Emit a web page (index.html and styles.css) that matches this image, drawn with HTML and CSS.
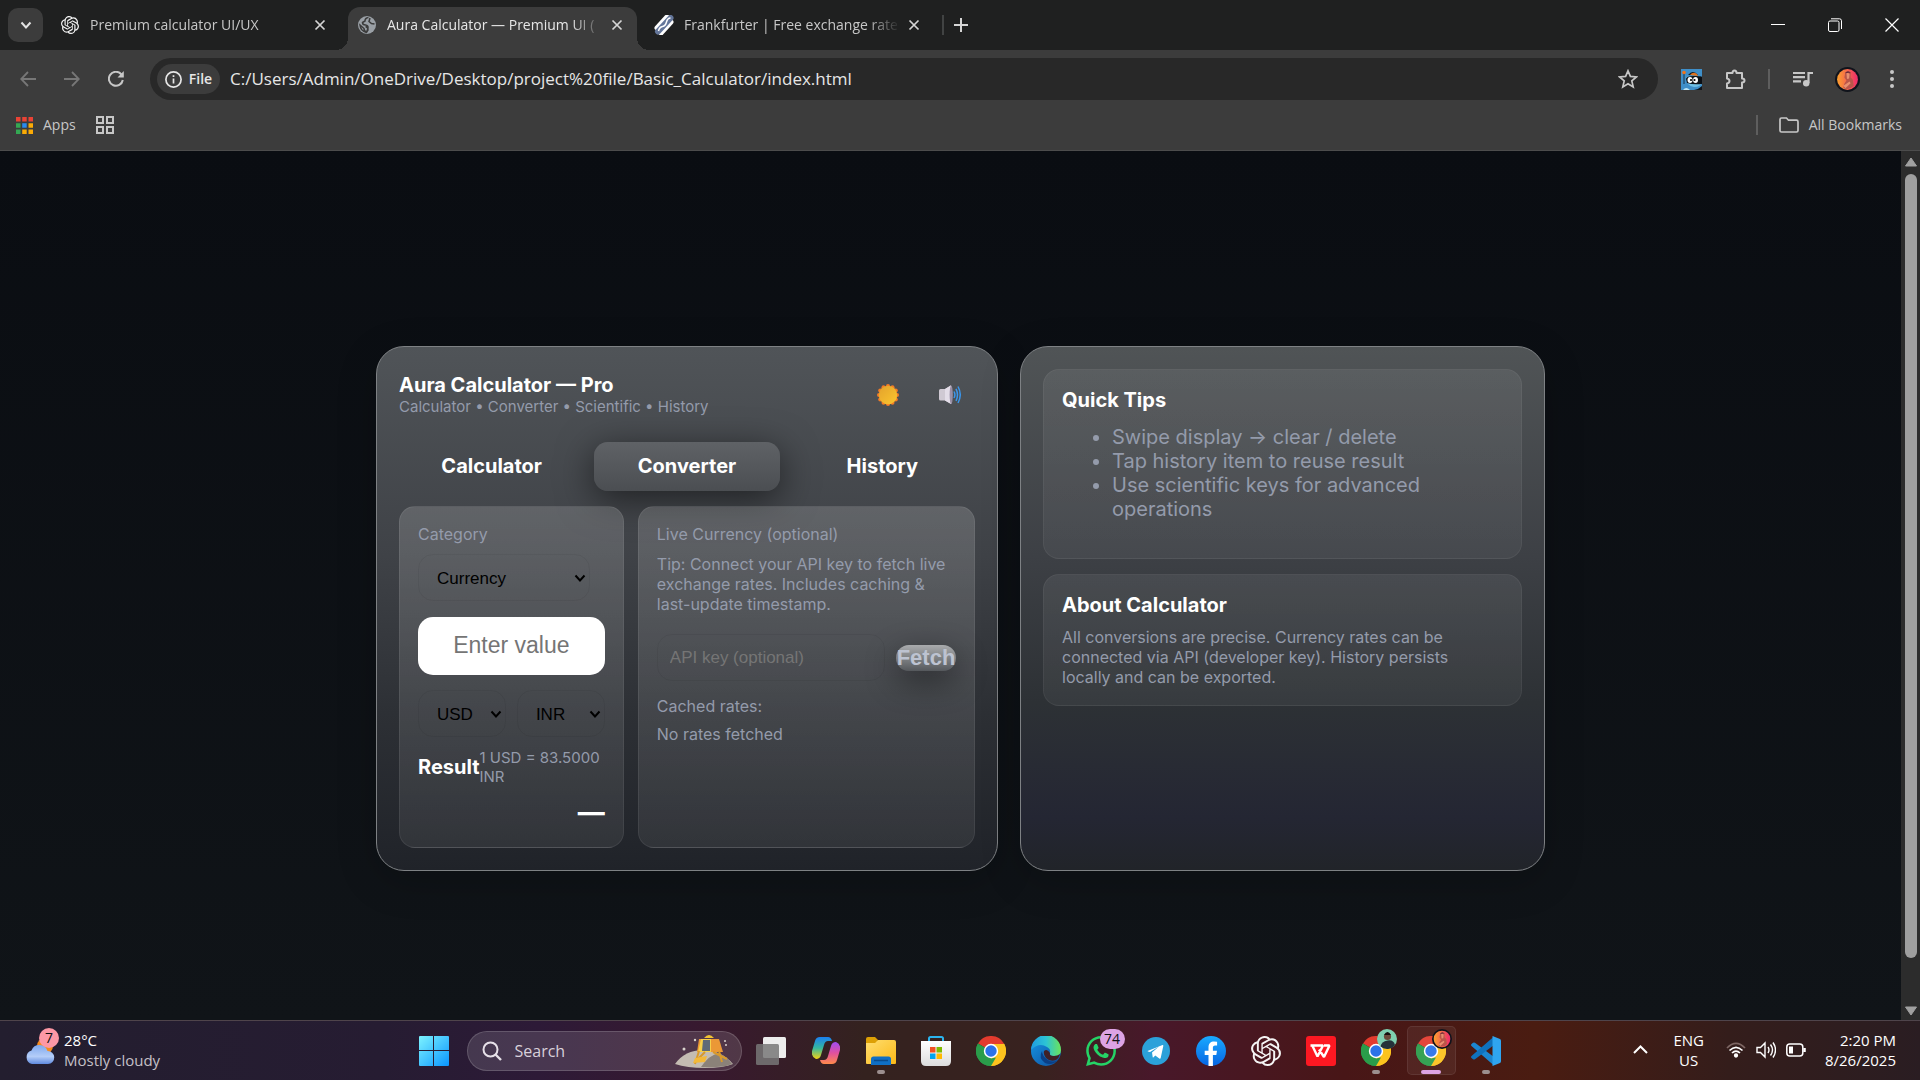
FILE: index.html
```html
<!DOCTYPE html>
<html lang="en">
<head>
<meta charset="utf-8">
<meta name="viewport" content="width=device-width, initial-scale=1">
<title>Aura Calculator — Premium UI</title>
<link rel="stylesheet" href="styles.css">
</head>
<body>
<svg class="defs" aria-hidden="true">
  <defs>
    <linearGradient id="win" x1="0" y1="0" x2="1" y2="1"><stop offset="0" stop-color="#7df3ff"/><stop offset="1" stop-color="#0a95ff"/></linearGradient>
    <linearGradient id="cloud" x1="0" y1="0" x2="0" y2="1"><stop offset="0" stop-color="#7fa9ee"/><stop offset=".6" stop-color="#b4cdf8"/><stop offset="1" stop-color="#5f8ade"/></linearGradient>
    <linearGradient id="folder" x1="0" y1="0" x2="1" y2="1"><stop offset="0" stop-color="#ffde70"/><stop offset="1" stop-color="#fbb917"/></linearGradient>
    <linearGradient id="cop1" x1="0" y1="0" x2="0" y2="1"><stop offset="0" stop-color="#1b7ff0"/><stop offset=".5" stop-color="#35b8a0"/><stop offset="1" stop-color="#f2d313"/></linearGradient>
    <linearGradient id="cop2" x1="0" y1="0" x2="0" y2="1"><stop offset="0" stop-color="#a04df5"/><stop offset=".5" stop-color="#e0509e"/><stop offset="1" stop-color="#ff8a4a"/></linearGradient>
    <linearGradient id="edge1" x1="0" y1="0" x2="1" y2="0"><stop offset="0" stop-color="#1f9be0"/><stop offset=".5" stop-color="#2cc3d5"/><stop offset="1" stop-color="#6be35a"/></linearGradient>
    <linearGradient id="edge2" x1="0" y1="0" x2="1" y2="1"><stop offset="0" stop-color="#1598e6"/><stop offset="1" stop-color="#0f4d9c"/></linearGradient>
    <linearGradient id="fb" x1="0" y1="0" x2="0" y2="1"><stop offset="0" stop-color="#19aaff"/><stop offset="1" stop-color="#0765e3"/></linearGradient>
    <linearGradient id="face" x1="0" y1="0" x2="1" y2="0"><stop offset="0" stop-color="#fba02e"/><stop offset="1" stop-color="#ef2b6c"/></linearGradient>
    <linearGradient id="sun" x1="0" y1="0" x2="1" y2="1"><stop offset="0" stop-color="#e3a22c"/><stop offset="1" stop-color="#fbc62f"/></linearGradient>
    <linearGradient id="bag" x1="0" y1="0" x2="0" y2="1"><stop offset="0" stop-color="#fff"/><stop offset="1" stop-color="#dcdcdc"/></linearGradient>
    <symbol id="openai" viewBox="0 0 24 24"><path d="M22.2819 9.8211a5.9847 5.9847 0 0 0-.5157-4.9108 6.0462 6.0462 0 0 0-6.5098-2.9A6.0651 6.0651 0 0 0 4.9807 4.1818a5.9847 5.9847 0 0 0-3.9977 2.9 6.0462 6.0462 0 0 0 .7427 7.0966 5.98 5.98 0 0 0 .511 4.9107 6.051 6.051 0 0 0 6.5146 2.9001A5.9847 5.9847 0 0 0 13.2599 24a6.0557 6.0557 0 0 0 5.7718-4.2058 5.9894 5.9894 0 0 0 3.9977-2.9001 6.0557 6.0557 0 0 0-.7475-7.0729zm-9.022 12.6081a4.4755 4.4755 0 0 1-2.8764-1.0408l.1419-.0804 4.7783-2.7582a.7948.7948 0 0 0 .3927-.6813v-6.7369l2.02 1.1686a.071.071 0 0 1 .038.052v5.5826a4.504 4.504 0 0 1-4.4945 4.4944zm-9.6607-4.1254a4.4708 4.4708 0 0 1-.5346-3.0137l.142.0852 4.783 2.7582a.7712.7712 0 0 0 .7806 0l5.8428-3.3685v2.3324a.0804.0804 0 0 1-.0332.0615L9.74 19.9502a4.4992 4.4992 0 0 1-6.1408-1.6464zM2.3408 7.8956a4.485 4.485 0 0 1 2.3655-1.9728V11.6a.7664.7664 0 0 0 .3879.6765l5.8144 3.3543-2.0201 1.1685a.0757.0757 0 0 1-.071 0l-4.8303-2.7865A4.504 4.504 0 0 1 2.3408 7.872zm16.5963 3.8558L13.1038 8.364 15.1192 7.2a.0757.0757 0 0 1 .071 0l4.8303 2.7913a4.4944 4.4944 0 0 1-.6765 8.1042v-5.6772a.79.79 0 0 0-.407-.667zm2.0107-3.0231l-.142-.0852-4.7735-2.7818a.7759.7759 0 0 0-.7854 0L9.409 9.2297V6.8974a.0662.0662 0 0 1 .0284-.0615l4.8303-2.7866a4.4992 4.4992 0 0 1 6.6802 4.66zM8.3065 12.863l-2.02-1.1638a.0804.0804 0 0 1-.038-.0567V6.0742a4.4992 4.4992 0 0 1 7.3757-3.4537l-.142.0805L8.704 5.459a.7948.7948 0 0 0-.3927.6813zm1.0976-2.3654l2.602-1.4998 2.6069 1.4998v2.9994l-2.5974 1.4997-2.6067-1.4997Z" fill="currentColor"/></symbol>
    <symbol id="x" viewBox="0 0 12 12"><path d="M1.5 1.5l9 9M10.5 1.5l-9 9" stroke="currentColor" stroke-width="1.7" fill="none"/></symbol>
    <symbol id="chev" viewBox="0 0 12 12"><path d="M1.5 3.5L6 8.5l4.500-5" stroke="currentColor" stroke-width="2" fill="none"/></symbol>
    <symbol id="chrome" viewBox="0 0 30 30">
      <path d="M15 15L2 7.500A15 15 0 0 1 28 7.500z" fill="#e33b2e"/>
      <path d="M15 15L28 7.500A15 15 0 0 1 15 30z" fill="#fcc31e"/>
      <path d="M15 15l0 15A15 15 0 0 1 2 7.500z" fill="#2a9d4a"/>
      <path d="M15 8h13.200A15 15 0 0 1 15 30l6.500-12z" fill="#fcc31e"/>
      <path d="M2 7.500l7 12.500 6 2.500 5-1L15 30A15 15 0 0 1 2 7.500z" fill="#2a9d4a"/>
      <circle cx="15" cy="15" r="7.200" fill="#fff"/><circle cx="15" cy="15" r="5.700" fill="#2b72e8"/>
    </symbol>
    <symbol id="avatar" viewBox="0 0 24 24">
      <circle cx="12" cy="12" r="12" fill="#10131b"/><circle cx="12" cy="12" r="10" fill="url(#face)"/>
      <path d="M10 5q3-2 5 1v4l2 2 1 6q-5 5-10 2l1-4 2-3-2-3z" fill="#b9564a"/><path d="M11 6q2-1 3 1l-.5 4-2 .5zM8 18l6-4 1 1.500-5 5z" fill="#e89070"/><path d="M9.500 6q3-4 6 0l-2-.5z" fill="#6a2c3a"/>
    </symbol>
  </defs>
</svg>

<div class="window">
  <header class="tabstrip">
    <button class="tab-search" aria-label="Search tabs"><svg width="12" height="12"><use href="#chev"/></svg></button>
    <div class="tab">
      <svg class="favicon bright" width="18" height="18"><use href="#openai"/></svg>
      <span class="tab-title">Premium calculator UI/UX</span>
      <button class="tab-close" aria-label="Close tab"><svg width="12" height="12"><use href="#x"/></svg></button>
    </div>
    <div class="tab active">
      <svg class="favicon" width="18" height="18" viewBox="0 0 18 18"><circle cx="9" cy="9" r="9" fill="#9aa0a6"/><path d="M10.500 1.500Q7 2 7 5L4.500 6.500q0 2.500 3 2.500 3 .5 2.500 3T8.500 16q-2.500-1-2.500-3.500L2 9q.5 6 6.500 7.500L10 14q0-3-2.500-3.500M12 2l-1 3.500 2.500 2L16.500 8" fill="none" stroke="#3c3c3c" stroke-width="1.500"/></svg>
      <span class="tab-title">Aura Calculator — Premium UI (</span>
      <button class="tab-close" aria-label="Close tab"><svg width="12" height="12"><use href="#x"/></svg></button>
    </div>
    <div class="tab">
      <svg class="favicon" width="20" height="20" viewBox="0 0 20 20"><path d="M3 13L13 2" stroke="#fff" stroke-width="5" stroke-linecap="round"/><path d="M7 18L17 7" stroke="#fff" stroke-width="5" stroke-linecap="round"/><path d="M4 16.500L16.500 3" stroke="#64769a" stroke-width="6" stroke-linecap="round"/><path d="M4.500 16q1-4 4-4.500t4-4.500 4-4" stroke="#fff" stroke-width="1.500" fill="none"/></svg>
      <span class="tab-title">Frankfurter | Free exchange rate</span>
      <button class="tab-close" aria-label="Close tab"><svg width="12" height="12"><use href="#x"/></svg></button>
    </div>
    <span class="strip-sep"></span>
    <button class="new-tab" aria-label="New tab"><svg width="14" height="14" viewBox="0 0 14 14"><path d="M7 0v14M0 7h14" stroke="currentColor" stroke-width="2"/></svg></button>
    <div class="win-controls">
      <button aria-label="Minimize"><svg width="14" height="14" viewBox="0 0 14 14"><path d="M0 6.500h14" stroke="#fff"/></svg></button>
      <button aria-label="Restore"><svg width="14" height="14" viewBox="0 0 14 14" fill="none" stroke="#fff"><rect x=".5" y="3" width="10.500" height="10.500" rx="1.500"/><path d="M3 .8h8.500q2 0 2 2V11"/></svg></button>
      <button aria-label="Close"><svg width="14" height="14" viewBox="0 0 14 14"><path d="M.5.500l13 13M13.500.500l-13 13" stroke="#fff" stroke-width="1.200"/></svg></button>
    </div>
  </header>

  <div class="toolbar">
    <button class="tool dim" aria-label="Back"><svg width="16" height="16" viewBox="0 0 16 16"><path d="M16 8H1.500M8 1L1.200 8 8 15" fill="none" stroke="currentColor" stroke-width="1.800"/></svg></button>
    <button class="tool dim" aria-label="Forward"><svg width="16" height="16" viewBox="0 0 16 16"><path d="M0 8h14.500M8 1l6.800 7L8 15" fill="none" stroke="currentColor" stroke-width="1.800"/></svg></button>
    <button class="tool" aria-label="Reload"><svg width="16" height="16" viewBox="0 0 16 16"><path d="M14.800 9A7 7 0 1 1 13 3l1.500 1.800" fill="none" stroke="currentColor" stroke-width="2"/><path d="M15.800 0v6.500H9.500z" fill="currentColor"/></svg></button>
    <div class="omnibox">
      <button class="chip"><svg width="17" height="17" viewBox="0 0 17 17"><circle cx="8.500" cy="8.500" r="7.600" fill="none" stroke="currentColor" stroke-width="1.700"/><path d="M8.500 7.500v5M8.500 4.200v1.800" stroke="currentColor" stroke-width="1.700"/></svg>File</button>
      <input class="url" type="text" aria-label="Address" value="C:/Users/Admin/OneDrive/Desktop/project%20file/Basic_Calculator/index.html">
      <button class="star" aria-label="Bookmark this tab"><svg width="20" height="20" viewBox="0 0 20 20"><path d="M10 1.800l2.400 5.600 6 .5-4.600 4 1.400 6-5.200-3.200L4.800 17.900l1.400-6-4.600-4 6-.5z" fill="none" stroke="currentColor" stroke-width="1.700"/></svg></button>
    </div>
    <div class="tools-right">
      <button class="tool" aria-label="Extension"><svg width="21" height="21" viewBox="0 0 21 21"><rect width="21" height="21" fill="#3f8fc9"/><path d="M3 4v11" stroke="#16324a"/><circle cx="3" cy="3.500" r="1.800" fill="#f0731a"/><path d="M7 6q5-6 10 0z" fill="#12181e"/><path d="M9 6q3-4 7-1l1 2z" fill="#e0731f"/><path d="M5 8q8-2 16 0v5q-1 5-8 5-8-1-8-10z" fill="#6fc0e6"/><path d="M5 10q0-3 8-3t8 1v7q-9 1-15-1z" fill="#0b1016"/><ellipse cx="9" cy="11" rx="2.500" ry="3" fill="#fff"/><ellipse cx="14.500" cy="11" rx="2.500" ry="3" fill="#fff"/><circle cx="10" cy="11" r="1.100"/><circle cx="13.500" cy="11" r="1.100"/><path d="M13 21q5-1 8-4v4z" fill="#11161c"/><path d="M2 21q3-4 7 0z" fill="#bfe6f5"/></svg></button>
      <button class="tool" aria-label="Extensions"><svg width="21" height="21" viewBox="0 0 21 21"><path d="M2 4h5.500q0-2.500 2-2.500t2 2.500H17v5.500q2.500 0 2.500 2t-2.500 2V19H2v-4.500q2.500-.5 2.500-2.500T2 9.500z" fill="none" stroke="currentColor" stroke-width="2" stroke-linejoin="round"/></svg></button>
      <span class="sep"></span>
      <button class="tool" aria-label="Media controls"><svg width="20" height="16" viewBox="0 0 20 16"><path d="M0 2h12M0 6.200h12M0 10.400h8M15.500 12V2H20" stroke="currentColor" stroke-width="2.200" fill="none"/><circle cx="13.200" cy="12.300" r="3.200" fill="currentColor"/></svg></button>
      <button class="tool" aria-label="Profile"><svg width="25" height="25"><use href="#avatar"/></svg></button>
      <button class="tool menu" aria-label="Menu"><svg width="6" height="18" viewBox="0 0 6 18" fill="currentColor"><circle cx="3" cy="2" r="2"/><circle cx="3" cy="9" r="2"/><circle cx="3" cy="16" r="2"/></svg></button>
    </div>
  </div>

  <nav class="bookmarks">
    <a href="#apps"><svg width="17" height="17" viewBox="0 0 17 17"><path d="M0 0h4.500v4.500H0zM6.200 0h4.500v4.500H6.200zM12.500 0H17v4.500h-4.500z" fill="#ea4335"/><path d="M0 6.200h4.500v4.500H0zM0 12.500h4.500V17H0z" fill="#34a853"/><path d="M6.200 6.200h4.500v4.500H6.200z" fill="#2a8af0"/><path d="M12.500 6.200H17v4.500h-4.500zM6.200 12.500h4.500V17H6.200zM12.500 12.500H17V17h-4.500z" fill="#fbab05"/></svg>Apps</a>
    <a href="#groups" aria-label="Tab groups"><svg width="18" height="18" viewBox="0 0 18 18"><path d="M1 1h6v6H1zM11 1h6v6h-6zM1 11h6v6H1zM11 11h6v6h-6z" fill="none" stroke="currentColor" stroke-width="2"/></svg></a>
    <a class="all" href="#all"><span class="sep"></span><svg width="20" height="16" viewBox="0 0 20 16"><path d="M1 2.500Q1 1 2.500 1h5L9.500 3.200h8Q19 3.200 19 4.700v8.800q0 1.500-1.500 1.500h-15Q1 15 1 13.500z" fill="none" stroke="currentColor" stroke-width="1.700"/></svg>All Bookmarks</a>
  </nav>

  <div class="viewport">
    <main class="page">
      <section class="card">
        <header class="card-head">
          <div class="brand">
            <h1>Aura Calculator — Pro</h1>
            <p class="sub">Calculator • Converter • Scientific • History</p>
          </div>
          <button class="icon-btn" aria-label="Toggle theme"><svg width="22" height="22" viewBox="0 0 22 22"><g fill="#f57c24"><circle cx="11" cy="11" r="9"/><circle cx="11" cy="2" r="2"/><circle cx="15.500" cy="3.200" r="2"/><circle cx="18.800" cy="6.500" r="2"/><circle cx="20" cy="11" r="2"/><circle cx="18.800" cy="15.500" r="2"/><circle cx="15.500" cy="18.800" r="2"/><circle cx="11" cy="20" r="2"/><circle cx="6.500" cy="18.800" r="2"/><circle cx="3.200" cy="15.500" r="2"/><circle cx="2" cy="11" r="2"/><circle cx="3.200" cy="6.500" r="2"/><circle cx="6.500" cy="3.200" r="2"/></g><circle cx="11" cy="11" r="9.200" fill="url(#sun)"/></svg></button>
          <button class="icon-btn" aria-label="Toggle sound"><svg width="22" height="20" viewBox="0 0 22 20"><path d="M0 5.500q0-1.500 1.500-1.500H6L11.500 0.500H12V19l-6-3.500H1.500Q0 15.500 0 14z" fill="#cfc9d3"/><path d="M6 4L12 .5V19l-6-3.500z" fill="#e3dde8"/><ellipse cx="12.200" cy="9.800" rx="1.600" ry="9.300" fill="#998fa5"/><path d="M15 6.500q1.800 3.200 0 6.500M17 3.800q3 6 0 12M19 1.500q4.500 8.200 0 16.500" fill="none" stroke="#3a96ec" stroke-width="1.500"/></svg></button>
        </header>
        <nav class="modes">
          <button>Calculator</button>
          <button class="on">Converter</button>
          <button>History</button>
        </nav>
        <div class="panels">
          <section class="panel">
            <label class="note" for="category">Category</label>
            <div class="select wide"><select id="category"><option>Currency</option></select><svg width="12" height="12"><use href="#chev"/></svg></div>
            <input class="amount" type="text" placeholder="Enter value" aria-label="Value">
            <div class="units">
              <div class="select"><select aria-label="From"><option>USD</option></select><svg width="12" height="12"><use href="#chev"/></svg></div>
              <div class="select"><select aria-label="To"><option>INR</option></select><svg width="12" height="12"><use href="#chev"/></svg></div>
            </div>
            <div class="result"><strong>Result</strong><span>1 USD = 83.5000 INR</span></div>
            <output class="total">—</output>
          </section>
          <section class="panel">
            <p class="note">Live Currency (optional)</p>
            <p class="note tip">Tip: Connect your API key to fetch live exchange rates. Includes caching &amp; last-update timestamp.</p>
            <div class="fetch-row">
              <input class="key" type="text" placeholder="API key (optional)" aria-label="API key">
              <button class="fetch">Fetch</button>
            </div>
            <p class="note cached">Cached rates:</p>
            <p class="note rates">No rates fetched</p>
          </section>
        </div>
      </section>

      <aside class="card side">
        <section class="info">
          <h2>Quick Tips</h2>
          <ul>
            <li>Swipe display → clear / delete</li>
            <li>Tap history item to reuse result</li>
            <li>Use scientific keys for advanced operations</li>
          </ul>
        </section>
        <section class="info">
          <h2>About Calculator</h2>
          <p class="note">All conversions are precise. Currency rates can be connected via API (developer key). History persists locally and can be exported.</p>
        </section>
      </aside>
    </main>
    <div class="scrollbar" aria-hidden="true">
      <svg width="14" height="10" viewBox="0 0 14 10"><path d="M7 1l5.500 8h-11z" fill="#a0a0a0" stroke="#a0a0a0" stroke-linejoin="round"/></svg>
      <div class="track"><div class="thumb"></div></div>
      <svg width="14" height="10" viewBox="0 0 14 10"><path d="M7 9l5.500-8h-11z" fill="#a0a0a0" stroke="#a0a0a0" stroke-linejoin="round"/></svg>
    </div>
  </div>

  <footer class="taskbar">
    <a class="weather" href="#weather">
      <span class="weather-icon"><svg width="30" height="32" viewBox="0 0 30 32"><circle cx="20" cy="14" r="8" fill="#f58a1c"/><path d="M7 32a7 7 0 0 1-.5-13.500A8.500 8.500 0 0 1 22.500 19 6.500 6.500 0 0 1 23 32z" fill="url(#cloud)"/></svg><span class="badge pink">7</span></span>
      <span class="weather-text"><b>28°C</b><span>Mostly cloudy</span></span>
    </a>
    <div class="apps">
      <button class="app" aria-label="Start"><svg width="30" height="30" viewBox="0 0 30 30"><path d="M0 1q0-1 1-1h13v14H0zM15 0h14q1 0 1 1v13H15zM0 15h14v15H1q-1 0-1-1zM15 15h15v14q0 1-1 1H15z" fill="url(#win)"/></svg></button>
      <label class="search">
        <svg width="20" height="20" viewBox="0 0 20 20"><circle cx="8.500" cy="8.500" r="7" fill="none" stroke="#e6e0e8" stroke-width="2"/><path d="M13.500 13.500L19 19" stroke="#e6e0e8" stroke-width="2.400"/></svg>
        <input type="search" placeholder="Search" aria-label="Search">
        <svg width="58" height="34" viewBox="0 0 58 34"><path d="M0 30Q10 16 28 16t30 14q-10 4-28 4T0 30z" fill="#c4bcb2"/><path d="M26 33q8-12 18-14 8 4 13 11-10 4-31 3z" fill="#8b8279"/><path d="M24 5h20l4 13H22z" fill="#eb9836"/><path d="M26 5h10v13H23z" fill="#f6cf4a"/><path d="M28 6h7v11h-8z" fill="#5f6a78"/><path d="M29 4q5-6 10 0z" fill="#f1c232"/><path d="M24 17l-4 13M30 18l-10 10M44 17l3 11M38 18l14 7" stroke="#d99a2b" stroke-width="2"/><path d="M20 24l12-2-2 6-12 1z" fill="#f3b93a"/><g fill="#d8d2cc"><circle cx="9" cy="15" r="1.500"/><circle cx="20" cy="6" r="1.200"/><circle cx="50" cy="7" r="1"/><circle cx="51" cy="11" r="1"/></g></svg>
      </label>
      <button class="app" aria-label="Task view"><svg width="30" height="30" viewBox="0 0 30 30"><rect x="7" y="1" width="23" height="21" rx="1.500" fill="#ededed"/><rect x="0" y="8" width="23" height="21" rx="1.500" fill="#777" fill-opacity=".85"/></svg></button>
      <button class="app" aria-label="Copilot"><svg width="28" height="27" viewBox="0 0 28 27"><path d="M8 0h8q3 0 4 4h-4q-3 0-4 4l-3 10q-1 4-5 4-5-2-4-8L3 4q1-4 5-4z" fill="url(#cop1)"/><path d="M20 27h-8q-3 0-4-4h4q3 0 4-4l3-10q1-4 5-4 5 2 4 8l-3 10q-1 4-5 4z" fill="url(#cop2)"/></svg></button>
      <button class="app open" aria-label="File Explorer"><svg width="30" height="28" viewBox="0 0 30 28"><path d="M0 2q0-2 2-2h7l3 3-2 5H0z" fill="#dda005"/><path d="M0 6h9l3-3h16q2 0 2 2v21q0 1-1 1H1q-1 0-1-1z" fill="url(#folder)"/><path d="M5 28v-6q0-2.500 2.500-2.500h15Q25 19.500 25 22v6z" fill="#0f6fc4"/><path d="M8 23.500h14" stroke="#084b8c" stroke-width="1.500"/></svg></button>
      <button class="app" aria-label="Microsoft Store"><svg width="30" height="30" viewBox="0 0 30 30"><path d="M8 7V2.500Q8 1 9.500 1h11Q22 1 22 2.500V7" fill="none" stroke="#2bb4ee" stroke-width="2"/><path d="M0 5h30v20q0 5-5 5H5q-5 0-5-5z" fill="url(#bag)"/><path d="M9 11h5.500v5.500H9z" fill="#f25022"/><path d="M15.500 11H21v5.500h-5.500z" fill="#7fba00"/><path d="M9 17.500h5.500V23H9z" fill="#00a4ef"/><path d="M15.500 17.500H21V23h-5.500z" fill="#ffb900"/></svg></button>
      <button class="app" aria-label="Chrome"><svg width="30" height="30"><use href="#chrome"/></svg></button>
      <button class="app" aria-label="Edge"><svg width="30" height="30" viewBox="0 0 30 30"><circle cx="15" cy="15" r="15" fill="url(#edge2)"/><path d="M0 14A15 15 0 0 1 30 14q0 6-7 6-5 0-4-3 1-4-3-6Q8 6 0 14z" fill="url(#edge1)"/><path d="M11 15q-4 7 3 12 7 3 13-3-5 3-10 0-6-4-6-9z" fill="#0b3f86"/><path d="M19 17q-1 3 4 3 4 0 6-2-1 4-4 6-6 2-10-2-3-4-2-7 3-3 6 2z" fill="#402026"/></svg></button>
      <button class="app" aria-label="WhatsApp"><svg width="30" height="30" viewBox="0 0 24 24"><path fill="#25d366" d="M17.472 14.382c-.297-.149-1.758-.867-2.030-.967-.273-.099-.471-.148-.670.150-.197.297-.767.966-.940 1.164-.173.199-.347.223-.644.075-.297-.150-1.255-.463-2.390-1.475-.883-.788-1.480-1.761-1.653-2.059-.173-.297-.018-.458.130-.606.134-.133.298-.347.446-.520.149-.174.198-.298.298-.497.099-.198.050-.371-.025-.520-.075-.149-.669-1.612-.916-2.207-.242-.579-.487-.500-.669-.510-.173-.008-.371-.010-.570-.010-.198 0-.520.074-.792.372-.272.297-1.040 1.016-1.040 2.479 0 1.462 1.065 2.875 1.213 3.074.149.198 2.096 3.200 5.077 4.487.709.306 1.262.489 1.694.625.712.227 1.360.195 1.871.118.571-.085 1.758-.719 2.006-1.413.248-.694.248-1.289.173-1.413-.074-.124-.272-.198-.570-.347m-5.421 7.403h-.004a9.870 9.870 0 01-5.031-1.378l-.361-.214-3.741.982.998-3.648-.235-.374a9.860 9.860 0 01-1.510-5.260c.001-5.450 4.436-9.884 9.888-9.884 2.640 0 5.122 1.030 6.988 2.898a9.825 9.825 0 012.893 6.994c-.003 5.450-4.437 9.884-9.885 9.884m8.413-18.297A11.815 11.815 0 0012.050 0C5.495 0 .160 5.335.157 11.892c0 2.096.547 4.142 1.588 5.945L.057 24l6.305-1.654a11.882 11.882 0 005.683 1.448h.005c6.554 0 11.890-5.335 11.893-11.893a11.821 11.821 0 00-3.480-8.413z"/></svg><span class="badge violet">74</span></button>
      <button class="app" aria-label="Telegram"><svg width="28" height="28" viewBox="0 0 28 28"><circle cx="14" cy="14" r="14" fill="#2ba1da"/><path d="M5.500 14L20.500 8q1-.2.800 1l-2.600 12q-.4 1-1.400.4l-4-3-2 2q-.5.400-.6-.4l-.7-4.500 7-6-9 5.500-2-.6q-1-.4-.5-.4z" fill="#fff"/></svg></button>
      <button class="app" aria-label="Facebook"><svg width="30" height="30" viewBox="0 0 30 30"><circle cx="15" cy="15" r="15" fill="url(#fb)"/><path d="M12.500 30V19H8.700v-4.300h3.800v-3.300c0-3.800 2.200-5.800 5.600-5.800l3 .2v3.800h-2c-1.700 0-2.200 1-2.200 2.100v3H21l-.7 4.300h-3.400v11z" fill="#fff"/></svg></button>
      <button class="app bright" aria-label="ChatGPT"><svg width="30" height="30"><use href="#openai"/></svg></button>
      <button class="app" aria-label="WPS Office"><svg width="30" height="30" viewBox="0 0 30 30"><rect width="30" height="30" rx="3" fill="#fd1822"/><path d="M4.500 9.500H17l-5.500 11L6.500 10M13 13.500l5 7.500 5.500-11.500H18" fill="none" stroke="#fff" stroke-width="2.400" stroke-linejoin="bevel"/></svg></button>
      <button class="app open" aria-label="Chrome, first profile"><svg width="30" height="30"><use href="#chrome"/></svg><svg class="profile" width="20" height="20" viewBox="0 0 20 20"><circle cx="10" cy="10" r="10" fill="#7fd0b0"/><circle cx="10.500" cy="7.500" r="3.600" fill="#6b4a3a"/><path d="M7 6q3.500-6 7 0z" fill="#15110f"/><path d="M3.500 17.500q1-5 7-6t7.500 4.500a10 10 0 0 1-14.500 1.500z" fill="#25323a"/></svg></button>
      <button class="app open current" aria-label="Chrome, second profile"><svg width="30" height="30"><use href="#chrome"/></svg><svg class="profile" width="20" height="20"><use href="#avatar"/></svg></button>
      <button class="app open" aria-label="Visual Studio Code"><svg width="30" height="30" viewBox="0 0 30 30"><path d="M.5 10q-1-1 0-2l1.500-1.200q1-.8 2 0L23 21v8.500z" fill="#1b86d0"/><path d="M.5 20q-1 1 0 2L2 23.200q1 .8 2 0L23 9V.5z" fill="#0f72bd"/><path d="M21.500 0l7.500 3q1 .5 1 2v20q0 1.500-1 2l-7.500 3z" fill="#2fa5f0"/></svg></button>
    </div>
    <div class="tray">
      <button aria-label="Show hidden icons"><svg width="15" height="9" viewBox="0 0 15 9"><path d="M1 8l6.500-6.500L14 8" fill="none" stroke="#fff" stroke-width="2"/></svg></button>
      <span class="lang">ENG<br>US</span>
      <span class="status">
        <svg width="20" height="16" viewBox="0 0 20 16" fill="none" stroke="#fff" stroke-width="1.700"><path d="M1 6q9-9 18 0" stroke="#7d6663"/><path d="M3.500 8.500q6.500-6.500 13 0M6 11q4-4 8 0"/><circle cx="10" cy="13.500" r="1.300" fill="#fff"/></svg>
        <svg width="20" height="18" viewBox="0 0 20 18" fill="none" stroke="#fff" stroke-width="1.400"><path d="M1 6.500h3.500L9 2v14l-4.500-4.500H1zM12 6q2 3 0 6M14.500 3.500q4 5.500 0 11M17 1.500q5 7.500 0 15"/></svg>
        <svg width="20" height="14" viewBox="0 0 20 14"><rect x=".8" y="1" width="16" height="12" rx="3" fill="none" stroke="#fff" stroke-width="1.500"/><rect x="3" y="3.500" width="4" height="7" fill="#fff"/><path d="M18.500 5v4" stroke="#fff" stroke-width="2.500"/></svg>
      </span>
      <span class="clock">2:20 PM<br>8/26/2025</span>
    </div>
  </footer>
</div>
</body>
</html>
```
FILE: styles.css
```css
* { box-sizing: border-box; }
body { margin: 0; }
h1, h2, p, ul { margin: 0; }
button, input, select {
  margin: 0;
  padding: 0;
  border: 0;
  background: none;
  color: inherit;
  font: inherit;
}
button { display: flex; align-items: center; justify-content: center; }
input, select { min-width: 0; outline: 0; }
svg { display: block; flex: none; }
a { color: inherit; text-decoration: none; }
.defs { position: absolute; width: 0; height: 0; }

.window {
  display: flex;
  flex-direction: column;
  height: 100vh;
  overflow: hidden;
  background: #3c3c3c;
  color: #c7c7c7;
  font: 14px/20px "Open Sans", "Noto Sans", sans-serif;
}

/* Tab strip */
.tabstrip {
  display: flex;
  align-items: center;
  height: 50px;
  padding-left: 8px;
  background: #1f2020;
}
.tab-search {
  width: 35px;
  height: 34px;
  margin-right: 8px;
  border-radius: 10px;
  background: #3c3c3c;
  color: #e3e3e3;
}
.tab {
  position: relative;
  display: flex;
  align-items: center;
  align-self: flex-end;
  width: 289px;
  height: 43px;
  margin-right: 8px;
  padding: 0 14px 7px 9px;
}
.tab .favicon { width: 20px; }
.tab-title {
  flex: 1;
  margin: 0 8px 0 10px;
  overflow: hidden;
  white-space: nowrap;
  -webkit-mask-image: linear-gradient(90deg, #000 85%, transparent);
  mask-image: linear-gradient(90deg, #000 85%, transparent);
}
.tab-close { width: 12px; height: 20px; color: #d5d5d5; }
.bright { color: #f4f4f4; }
.tab.active {
  border-radius: 12px 12px 0 0;
  background: #3c3c3c;
  color: #e6e6e6;
}
.tab.active::before,
.tab.active::after {
  content: "";
  position: absolute;
  bottom: 0;
  width: 12px;
  height: 12px;
}
.tab.active::before { right: 100%; background: radial-gradient(circle at 0 0, transparent 12px, #3c3c3c 12px); }
.tab.active::after { left: 100%; background: radial-gradient(circle at 100% 0, transparent 12px, #3c3c3c 12px); }
.strip-sep { width: 2px; height: 20px; margin-right: 10px; background: #414343; }
.new-tab { color: #d5d5d5; }
.win-controls { display: flex; align-self: stretch; margin-left: auto; }
.win-controls button { width: 57px; }

/* Toolbar */
.toolbar {
  display: flex;
  align-items: center;
  height: 58px;
  padding: 0 5px 0 6px;
  border-radius: 10px 10px 0 0;
}
.tool { width: 44px; height: 44px; color: #c7c7c7; }
.dim { color: #777; }
.omnibox {
  display: flex;
  flex: 1;
  align-items: center;
  height: 42px;
  margin: 0 11px 0 12px;
  padding: 0 20px 0 7px;
  border-radius: 21px;
  background: #282828;
  color: #e6e6e6;
}
.chip {
  gap: 7px;
  width: 63px;
  height: 30px;
  border-radius: 15px;
  background: #3c3c3c;
  font-weight: 600;
}
.url { flex: 1; margin-left: 10px; font-size: 17px; }
.star { color: #c7c7c7; }
.tools-right { display: flex; align-items: center; }
.menu { width: 46px; }
.sep { width: 2px; height: 20px; margin: 0 11px; background: #5e5e5e; }

.bookmarks {
  display: flex;
  align-items: center;
  gap: 20px;
  height: 43px;
  padding: 0 18px 8px 16px;
  border-bottom: 1px solid #4c4c4c;
}
.bookmarks a { display: flex; align-items: center; gap: 10px; }
.bookmarks .all { margin-left: auto; }

/* Web page */
.viewport { display: flex; flex: 1; min-height: 0; }
.page {
  display: grid;
  flex: 1;
  grid-template-columns: minmax(0, 622px) minmax(0, 525px);
  gap: 22px;
  align-content: start;
  justify-content: center;
  padding: 195px 0 0 20px;
  overflow: hidden;
  background: linear-gradient(#0a0d12, #101418);
  color: #fff;
  font: 20px/24px Inter, "Liberation Sans", sans-serif;
}
.card {
  min-height: 525px;
  padding: 22px;
  border: 1px solid #7e8184;
  border-radius: 28px;
  background: linear-gradient(#505458, #3f4247 40%, #2d3035 70%, #202329);
  box-shadow: 0 10px 40px rgba(0, 0, 0, .2);
}
.side { background: linear-gradient(#505456, #3d4045 40%, #2d3135 68%, #242633 90%, #212429); }
.card-head { display: flex; align-items: center; gap: 12px; height: 52px; }
.brand { flex: 1; }
h1, h2 { font-size: 20px; line-height: 24px; font-weight: 700; }
.sub { color: #949bab; font-size: 15px; line-height: 20px; }
.icon-btn { width: 50px; height: 52px; }
.modes {
  display: grid;
  grid-template-columns: repeat(3, 1fr);
  gap: 10px;
  margin-top: 21px;
}
.modes button { height: 49px; padding-bottom: 2px; border-radius: 14px; font-weight: 700; }
.modes .on {
  background: linear-gradient(#5f6266, #4b4e52);
  box-shadow: 0 8px 36px rgba(0, 0, 0, .55);
}
.panels {
  display: grid;
  grid-template-columns: 2fr 3fr;
  gap: 14px;
  margin-top: 15px;
}
.panel, .info {
  min-width: 0;
  padding: 18px;
  border: 1px solid rgba(255, 255, 255, .07);
  border-radius: 16px;
  background: linear-gradient(rgba(255, 255, 255, .16), rgba(255, 255, 255, .07));
}
.panel { position: relative; padding-top: 17px; }
.note { display: block; color: #949bab; font-size: 16px; line-height: 20px; }

.select { display: flex; align-items: center; height: 47px; }
.select select {
  appearance: none;
  flex: 1;
  height: 47px;
  padding: 2px 20px 0 18px;
  border: 1px solid rgba(0, 0, 0, .05);
  border-radius: 15px;
  color: #000;
  font: 17px/20px "Liberation Sans", sans-serif;
}
.select svg { margin: 0 4px 0 -16px; color: #000; pointer-events: none; }
.wide { width: 172px; margin-top: 10px; }
.amount {
  display: block;
  width: 100%;
  height: 58px;
  margin: 16px 0 15px;
  padding-bottom: 2px;
  border-radius: 15px;
  background: #fff;
  color: #222;
  font: 23px/28px "Liberation Sans", sans-serif;
  text-align: center;
}
.amount::placeholder, .key::placeholder { color: #757575; opacity: 1; }
.units { display: grid; grid-template-columns: 1fr 1fr; gap: 11px; }
.result { display: flex; align-items: center; margin-top: 11px; }
.result span { color: #949bab; font-size: 15px; line-height: 19px; }
.total { display: block; margin-top: 10px; font-size: 27px; line-height: 33px; font-weight: 700; text-align: right; }

.tip { margin-top: 10px; }
.fetch-row {
  display: grid;
  grid-template-columns: 1fr 60px;
  gap: 11px;
  align-items: center;
  margin-top: 20px;
}
.key {
  height: 47px;
  padding: 0 12px;
  border: 1px solid rgba(0, 0, 0, .05);
  border-radius: 15px;
  font: 17px/20px "Liberation Sans", sans-serif;
}
.fetch {
  height: 26px;
  border-radius: 13px;
  background: linear-gradient(#a9abad, #55585c);
  box-shadow: 0 10px 32px rgba(0, 0, 0, .45);
  color: #bdc3d1;
  font: bold 22px/24px "Liberation Sans", sans-serif;
}
.cached { margin-top: 15px; }
.rates { margin-top: 8px; }

.side { display: flex; flex-direction: column; gap: 15px; }
.info { padding-right: 24px; background: linear-gradient(rgba(255, 255, 255, .07), rgba(255, 255, 255, .05)); border-color: rgba(255, 255, 255, .05); }
.info ul { margin: 13px 0 19px; padding-left: 50px; color: #949bab; }
.info .note { margin-top: 10px; }

.scrollbar {
  display: flex;
  flex-direction: column;
  align-items: center;
  width: 19px;
  padding: 6px 0 4px;
  background: #2c2c2c;
}
.track { flex: 1; padding: 7px 0; }
.thumb { width: 12px; height: 95%; border-radius: 6px; background: #9f9f9f; }

/* Taskbar */
.taskbar {
  display: grid;
  grid-template-columns: 1fr auto 1fr;
  align-items: center;
  height: 60px;
  border-top: 1px solid #4f444b;
  background: linear-gradient(90deg, #231e2f, #261c32 20%, #2d1a37 28%, #38192f 37%, #34221f 45%, #38221f 54%, #48182a 60%, #481617 70%, #4a1c11 80%, #341d1b 90%, #2a1d22);
  color: #fff;
}
.weather { display: flex; align-items: center; gap: 9px; padding-left: 25px; }
.weather-icon { position: relative; display: flex; align-items: flex-end; height: 46px; padding-bottom: 10px; }
.weather-text { display: flex; flex-direction: column; padding-bottom: 2px; font-size: 15px; }
.weather-text b { font-weight: 400; }
.weather-text span { color: #c5c0c7; }
.badge {
  position: absolute;
  height: 20px;
  border-radius: 10px;
  color: #111;
  text-align: center;
}
.pink { top: 0; left: 14px; width: 20px; background: #fd98a5; }
.violet { top: 8px; right: 4px; width: 25px; background: #dda3e4; }
.apps { display: flex; align-items: center; }
.app { position: relative; width: 55px; height: 59px; }
.search {
  display: flex;
  align-items: center;
  gap: 13px;
  width: 275px;
  height: 40px;
  margin: 0 2px 0 5px;
  padding: 0 8px 0 14px;
  border: 1px solid rgba(255, 255, 255, .16);
  border-radius: 20px;
  background: rgba(255, 255, 255, .13);
}
.search input { flex: 1; font-size: 16px; }
.search input::placeholder { color: #d8d0da; opacity: 1; }
.open::after {
  content: "";
  position: absolute;
  bottom: 6px;
  width: 8px;
  height: 4px;
  border-radius: 2px;
  background: #9c8f8f;
}
.current::before {
  content: "";
  position: absolute;
  inset: 5px 3px;
  border: 1px solid rgba(255, 255, 255, .08);
  border-radius: 5px;
  background: rgba(255, 255, 255, .06);
}
.current::after { width: 20px; background: #dda3e4; }
.profile { position: absolute; top: 8px; right: 7px; }
.tray {
  display: flex;
  align-items: center;
  justify-content: flex-end;
  padding: 0 24px 2px 0;
  font-size: 15px;
}
.lang { margin-left: 25px; text-align: center; }
.status { display: flex; align-items: center; gap: 10px; margin: 0 19px 0 22px; }
.clock { text-align: right; }
```
